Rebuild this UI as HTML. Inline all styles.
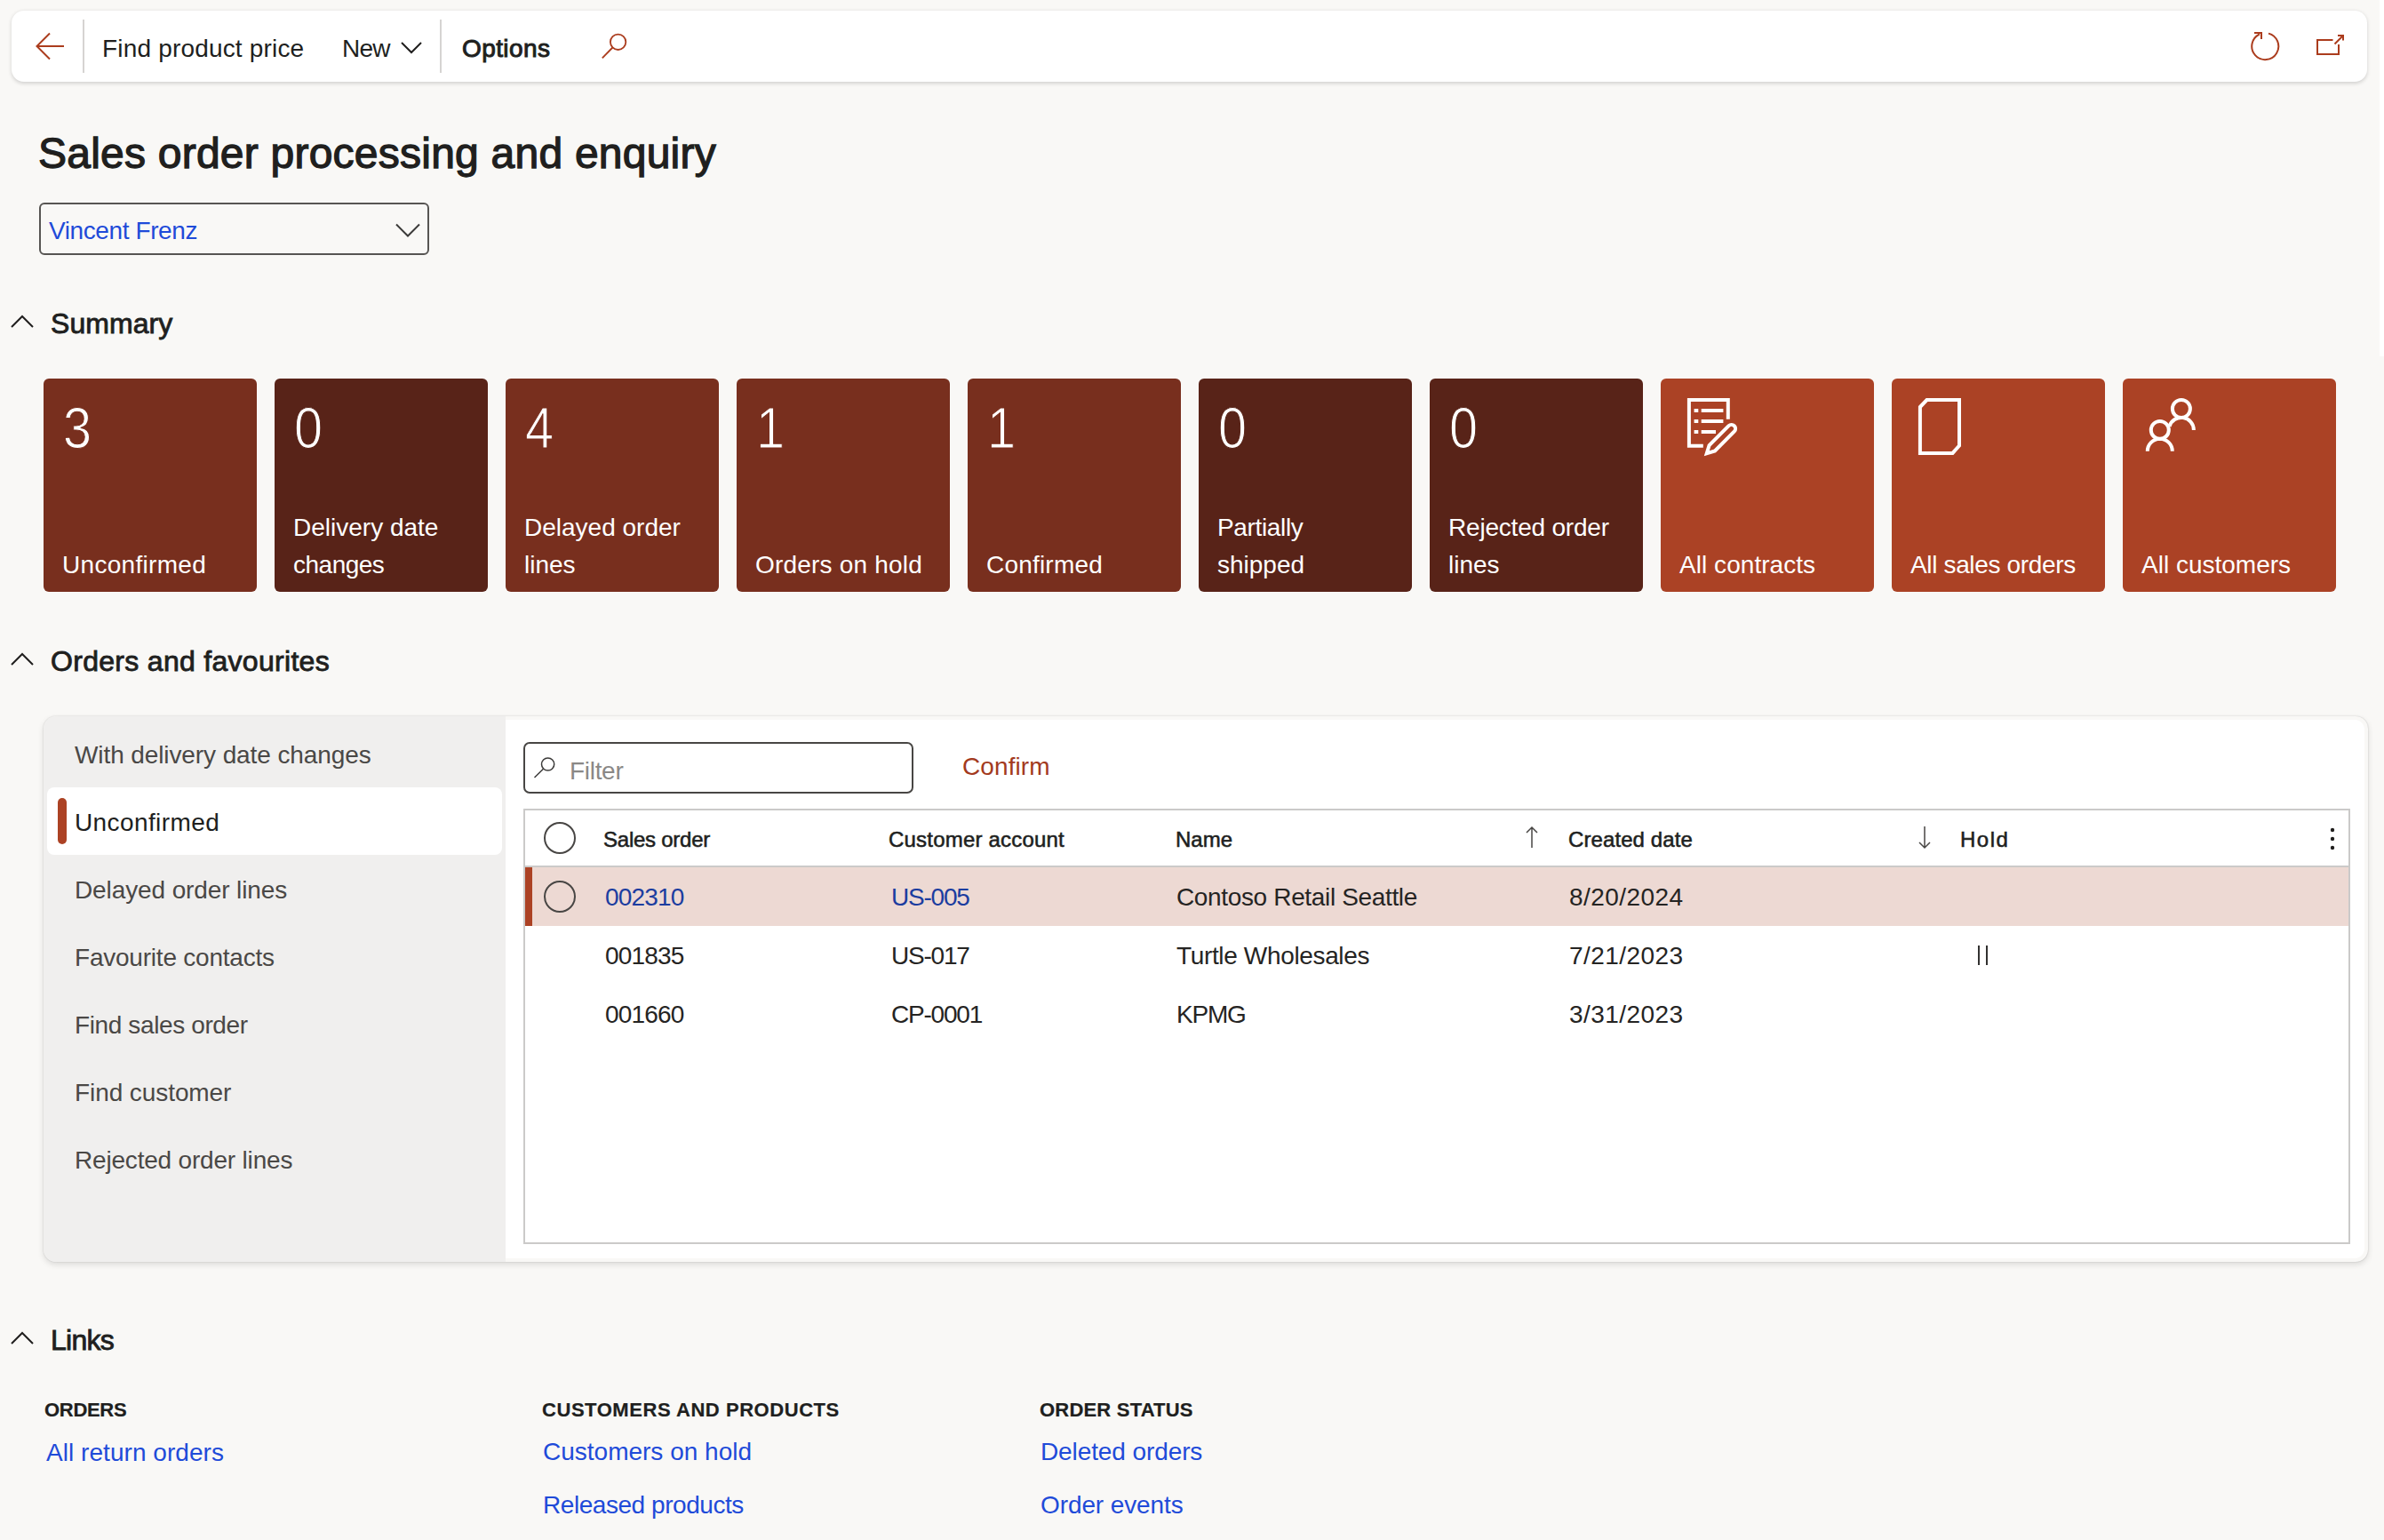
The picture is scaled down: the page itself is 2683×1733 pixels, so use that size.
<!DOCTYPE html>
<html><head><meta charset="utf-8">
<style>
html,body{margin:0;padding:0}
body{width:2683px;height:1733px;overflow:hidden;position:relative;background:#F9F8F6;font-family:"Liberation Sans",sans-serif;color:#201F1E}
.a{position:absolute}
.t{position:absolute;white-space:nowrap;line-height:1;font-family:"Liberation Sans",sans-serif}
.s28{font-size:28px}
.b{font-weight:700}
.sbl{font-size:22px;font-weight:700;-webkit-text-stroke:0.2px #201F1E}
.sbh{font-size:24px;-webkit-text-stroke:0.55px #201F1E}
svg{position:absolute;left:0;top:0;overflow:visible}
.tile{position:absolute;top:426px;width:240px;height:240px;border-radius:6px}
.tile .n{position:absolute;left:22px;top:24px;font-size:64px;line-height:1;color:#fff}
.tile .l{position:absolute;left:21px;font-size:28px;line-height:42px;color:#fff;white-space:nowrap}
.c1{background:#782F1E}.c2{background:#582318}.c3{background:#AB4225}
.c1 .n{-webkit-text-stroke:1.1px #782F1E}.c2 .n{-webkit-text-stroke:1.1px #582318}
.tile .n{transform:scaleX(0.9);transform-origin:0 0}
.nav{color:#4A4846}
.link{color:#1F4BD9}
.glink{color:#1C3DA0}
.cell{color:#252423}
</style></head>
<body>

<!-- toolbar -->
<div class="a" style="left:13px;top:12px;width:2651px;height:80px;background:#fff;border-radius:14px;box-shadow:0 1.5px 4px rgba(0,0,0,0.16)"></div>
<div class="a" style="left:93px;top:22px;width:2px;height:60px;background:#D6D4D2"></div>
<div class="a" style="left:495px;top:22px;width:2px;height:60px;background:#D6D4D2"></div>
<div class="t s28" style="left:115px;top:41px;letter-spacing:0.18px">Find product price</div>
<div class="t s28" style="left:385px;top:41px;letter-spacing:-0.8px">New</div>
<div class="t s28" style="left:520px;top:41px;-webkit-text-stroke:1px #201F1E;letter-spacing:0.4px">Options</div>

<!-- title -->
<div class="t" style="left:43px;top:149px;font-size:48px;-webkit-text-stroke:1.3px #201F1E;letter-spacing:0.23px">Sales order processing and enquiry</div>
<div class="a" style="left:44px;top:228px;width:435px;height:55px;border:2px solid #575553;border-radius:6px"></div>
<div class="t s28 link" style="left:55px;top:246px;letter-spacing:-0.4px">Vincent Frenz</div>

<!-- summary -->
<div class="t" style="left:57px;top:348px;font-size:32px;-webkit-text-stroke:0.85px #201F1E;letter-spacing:0.07px">Summary</div>

<div class="tile c1" style="left:49px"><div class="n">3</div><div class="l" style="top:189px;letter-spacing:0.3px">Unconfirmed</div></div>
<div class="tile c2" style="left:309px"><div class="n">0</div><div class="l" style="top:147px">Delivery date<br><span style="letter-spacing:-0.5px">changes</span></div></div>
<div class="tile c1" style="left:569px"><div class="n">4</div><div class="l" style="top:147px">Delayed order<br>lines</div></div>
<div class="tile c1" style="left:829px"><div class="n">1</div><div class="l" style="top:189px;letter-spacing:0.2px">Orders on hold</div></div>
<div class="tile c1" style="left:1089px"><div class="n">1</div><div class="l" style="top:189px;letter-spacing:0.2px">Confirmed</div></div>
<div class="tile c2" style="left:1349px"><div class="n">0</div><div class="l" style="top:147px"><span style="letter-spacing:-0.35px">Partially</span><br>shipped</div></div>
<div class="tile c2" style="left:1609px"><div class="n">0</div><div class="l" style="top:147px"><span style="letter-spacing:-0.2px">Rejected order</span><br>lines</div></div>
<div class="tile c3" style="left:1869px"><div class="l" style="top:189px;letter-spacing:0.05px">All contracts</div></div>
<div class="tile c3" style="left:2129px"><div class="l" style="top:189px;letter-spacing:-0.35px">All sales orders</div></div>
<div class="tile c3" style="left:2389px"><div class="l" style="top:189px">All customers</div></div>

<!-- orders and favourites -->
<div class="t" style="left:57px;top:728px;font-size:32px;-webkit-text-stroke:0.85px #201F1E;letter-spacing:0.3px">Orders and favourites</div>

<div class="a" style="left:49px;top:806px;width:2616px;height:614px;background:#F9F8F6;border-radius:14px;box-shadow:0 0 1.5px rgba(0,0,0,0.22),0 3px 7px rgba(0,0,0,0.12)"></div>
<div class="a" style="left:49px;top:806px;width:520px;height:614px;background:#F0EFEE;border-radius:14px 0 0 14px"></div>
<div class="a" style="left:569px;top:810px;width:2092px;height:606px;background:#fff;border-radius:0 11px 11px 0"></div>
<div class="a" style="left:53px;top:886px;width:512px;height:76px;background:#fff;border-radius:8px"></div>
<div class="a" style="left:65px;top:898px;width:10px;height:52px;background:#AC4224;border-radius:5px"></div>

<div class="t s28 nav" style="left:84px;top:836px;letter-spacing:-0.1px">With delivery date changes</div>
<div class="t s28" style="left:84px;top:912px;letter-spacing:0.4px">Unconfirmed</div>
<div class="t s28 nav" style="left:84px;top:988px;letter-spacing:-0.11px">Delayed order lines</div>
<div class="t s28 nav" style="left:84px;top:1064px;letter-spacing:-0.22px">Favourite contacts</div>
<div class="t s28 nav" style="left:84px;top:1140px;letter-spacing:-0.38px">Find sales order</div>
<div class="t s28 nav" style="left:84px;top:1216px;letter-spacing:-0.08px">Find customer</div>
<div class="t s28 nav" style="left:84px;top:1292px;letter-spacing:-0.19px">Rejected order lines</div>

<!-- filter -->
<div class="a" style="left:589px;top:835px;width:435px;height:54px;border:2px solid #484644;border-radius:7px"></div>
<div class="t s28" style="left:641px;top:854px;color:#8A8886;letter-spacing:-0.3px">Filter</div>
<div class="t s28" style="left:1083px;top:849px;color:#A33A1E;letter-spacing:0.1px">Confirm</div>

<!-- grid -->
<div class="a" style="left:589px;top:910px;width:2052px;height:486px;border:2px solid #CBCAC9"></div>
<div class="a" style="left:591px;top:974px;width:2052px;height:2px;background:#CBCAC9"></div>
<div class="a" style="left:591px;top:976px;width:2052px;height:66px;background:#EDD9D3"></div>
<div class="a" style="left:591px;top:976px;width:8px;height:66px;background:#AC4224"></div>

<div class="t sbh" style="left:679px;top:933px;letter-spacing:-0.24px">Sales order</div>
<div class="t sbh" style="left:1000px;top:933px;letter-spacing:0.2px">Customer account</div>
<div class="t sbh" style="left:1323px;top:933px;letter-spacing:0px">Name</div>
<div class="t sbh" style="left:1765px;top:933px;letter-spacing:0.09px">Created date</div>
<div class="t sbh" style="left:2206px;top:933px;letter-spacing:1.5px">Hold</div>

<div class="t s28 glink" style="left:681px;top:996px;letter-spacing:-0.8px">002310</div>
<div class="t s28 glink" style="left:1003px;top:996px;letter-spacing:-1.2px">US-005</div>
<div class="t s28 cell" style="left:1324px;top:996px;letter-spacing:-0.35px">Contoso Retail Seattle</div>
<div class="t s28 cell" style="left:1766px;top:996px;letter-spacing:0.45px">8/20/2024</div>

<div class="t s28 cell" style="left:681px;top:1062px;letter-spacing:-0.8px">001835</div>
<div class="t s28 cell" style="left:1003px;top:1062px;letter-spacing:-1.2px">US-017</div>
<div class="t s28 cell" style="left:1324px;top:1062px;letter-spacing:-0.35px">Turtle Wholesales</div>
<div class="t s28 cell" style="left:1766px;top:1062px;letter-spacing:0.45px">7/21/2023</div>

<div class="t s28 cell" style="left:681px;top:1128px;letter-spacing:-0.8px">001660</div>
<div class="t s28 cell" style="left:1003px;top:1128px;letter-spacing:-1.2px">CP-0001</div>
<div class="t s28 cell" style="left:1324px;top:1128px;letter-spacing:-1.2px">KPMG</div>
<div class="t s28 cell" style="left:1766px;top:1128px;letter-spacing:0.45px">3/31/2023</div>

<!-- links -->
<div class="t" style="left:57px;top:1492px;font-size:32px;-webkit-text-stroke:0.85px #201F1E;letter-spacing:-0.75px">Links</div>
<div class="t sbl" style="left:50px;top:1576px;letter-spacing:-0.3px">ORDERS</div>
<div class="t sbl" style="left:610px;top:1576px;letter-spacing:0.55px">CUSTOMERS AND PRODUCTS</div>
<div class="t sbl" style="left:1170px;top:1576px;letter-spacing:0.2px">ORDER STATUS</div>
<div class="t s28 link" style="left:52px;top:1621px;letter-spacing:0.05px">All return orders</div>
<div class="t s28 link" style="left:611px;top:1620px;letter-spacing:0px">Customers on hold</div>
<div class="t s28 link" style="left:611px;top:1680px;letter-spacing:-0.45px">Released products</div>
<div class="t s28 link" style="left:1171px;top:1620px;letter-spacing:-0.1px">Deleted orders</div>
<div class="t s28 link" style="left:1171px;top:1680px;letter-spacing:-0.1px">Order events</div>

<!-- icons -->
<svg width="2683" height="1733" viewBox="0 0 2683 1733" fill="none">
  <!-- back arrow -->
  <path d="M72 52 H41 M56 37.5 L41.5 52 L56 66.5" stroke="#AB3C1D" stroke-width="2"/>
  <!-- new chevron -->
  <path d="M452 48 L463 59 L474 48" stroke="#201F1E" stroke-width="2"/>
  <!-- search -->
  <circle cx="695.6" cy="47.3" r="8.7" stroke="#AB3C1D" stroke-width="1.8"/>
  <path d="M689.4 53.5 L677.8 65.3" stroke="#AB3C1D" stroke-width="1.8"/>
  <!-- refresh -->
  <path d="M2553 37.6 A15 15 0 1 1 2543 38.5" stroke="#AB3C1D" stroke-width="2"/>
  <path d="M2537 37 H2545 V44" stroke="#AB3C1D" stroke-width="2"/>
  <!-- open new -->
  <path d="M2625.5 45 H2608 V61 H2632 V50" stroke="#AB3C1D" stroke-width="2"/>
  <path d="M2627.5 49.5 L2637 40 M2631 40 H2637 V45.5" stroke="#AB3C1D" stroke-width="2"/>
  <!-- dropdown chevron -->
  <path d="M446 252.5 L459 265.5 L472 252.5" stroke="#3B3A39" stroke-width="2"/>
  <!-- section chevrons -->
  <path d="M13 368 L25 356 L37 368" stroke="#201F1E" stroke-width="2"/>
  <path d="M13 748 L25 736 L37 748" stroke="#201F1E" stroke-width="2"/>
  <path d="M13 1512 L25 1500 L37 1512" stroke="#201F1E" stroke-width="2"/>
  <!-- contracts icon -->
  <g stroke="#fff" stroke-width="4">
    <path d="M1916.8 501.8 H1900.9 V450 H1944.8 V471.7"/>
    <path d="M1906.6 462 H1911.3 M1914.7 462 H1939.4 M1906.6 474 H1911.3 M1914.7 474 H1939.4 M1906.6 486 H1911.3 M1914.7 486 H1931"/>
    <path d="M1923.6 501.04 L1945.52 479.12 A4.5 4.5 0 0 1 1951.88 485.48 L1929.96 507.4 L1920.77 510.23 Z" stroke-linejoin="miter"/>
  </g>
  <!-- document icon -->
  <path d="M2160.9 458 L2168.5 450.1 H2205 V501.5 L2197.5 509.9 H2160.9 Z" stroke="#fff" stroke-width="4"/>
  <!-- people icon -->
  <g stroke="#fff" stroke-width="4">
    <circle cx="2454.9" cy="460" r="10"/>
    <path d="M2468.9 483.9 A14 14 0 0 0 2441.51 479.81"/>
    <circle cx="2430.8" cy="483.9" r="10"/>
    <path d="M2416.8 507.8 A14 14 0 0 1 2444.8 507.8"/>
  </g>
  <!-- filter search -->
  <circle cx="616.6" cy="860" r="7.1" stroke="#3B3A39" stroke-width="1.5"/>
  <path d="M611.5 865.2 L601.5 875" stroke="#3B3A39" stroke-width="1.5"/>
  <!-- grid circles -->
  <circle cx="630" cy="943" r="17" stroke="#484644" stroke-width="2"/>
  <circle cx="630" cy="1009" r="17" stroke="#484644" stroke-width="2"/>
  <!-- sort arrows -->
  <path d="M1724 931 V954 M1718 937 L1724 931 L1730 937" stroke="#484644" stroke-width="1.5"/>
  <path d="M2166 930 V954 M2160 948 L2166 954 L2172 948" stroke="#484644" stroke-width="1.5"/>
  <!-- more dots -->
  <circle cx="2625" cy="934" r="2.2" fill="#201F1E"/>
  <circle cx="2625" cy="944" r="2.2" fill="#201F1E"/>
  <circle cx="2625" cy="954" r="2.2" fill="#201F1E"/>
  <!-- hold icon -->
  <path d="M2227 1064 V1086 M2236 1064 V1086" stroke="#323130" stroke-width="2"/>
</svg>

<!-- scrollbar -->
<div class="a" style="left:2678px;top:0;width:5px;height:401px;background:#FFFFFF"></div>
</body></html>
